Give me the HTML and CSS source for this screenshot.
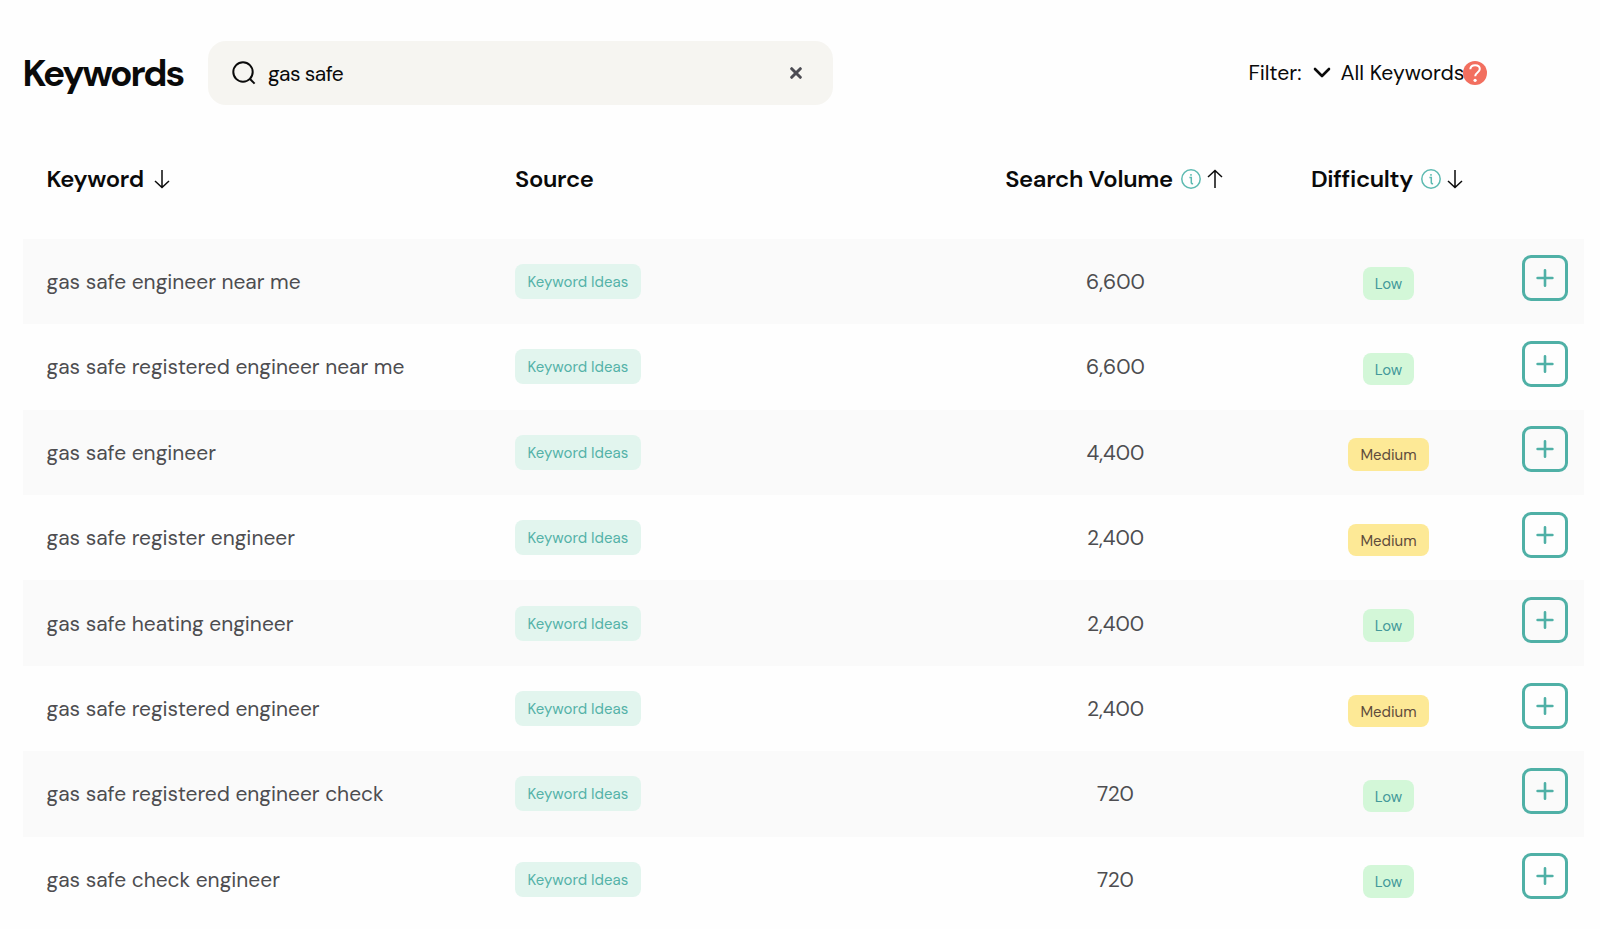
FILE: index.html
```html
<!DOCTYPE html>
<html lang="en">
<head>
    <meta charset="UTF-8">
    <meta name="viewport" content="width=device-width, initial-scale=1.0">
    <title>Keywords</title>
    <link rel="stylesheet" href="styles.css">
</head>
<body>
    <!-- Shared icons -->
    <svg class="sprite">
        <symbol id="arrow-down" viewBox="0 0 16 20">
            <path d="M8 1v17.5M1 12l7 6.5 7-6.5"/>
        </symbol>
        <symbol id="arrow-up" viewBox="0 0 16 20">
            <path d="M8 19V1.5M1 8l7-6.5L15 8"/>
        </symbol>
        <symbol id="info" viewBox="0 0 20 20">
            <circle cx="10" cy="10" r="9.2"/>
            <path d="M8.4 8.6h1.9v5.2q0 1 1.8.8M10 5v1.7"/>
        </symbol>
        <symbol id="plus" viewBox="0 0 18 18">
            <path d="M9 1.3v15.4M1.6 9h14.8"/>
        </symbol>
    </svg>

    <header class="topbar">
        <h1>Keywords</h1>
        <div class="search">
            <svg class="search-icon" viewBox="0 0 24 24"><circle cx="11" cy="11" r="9.7"/><path d="M18 18l4.6 4.6"/></svg>
            <span class="search-text">gas safe</span>
            <svg class="clear-icon" viewBox="0 0 12 12"><path d="M1.7 1.7l8.6 8.6M10.3 1.7l-8.6 8.6"/></svg>
        </div>
        <div class="filter">
            <span class="filter-label">Filter:</span>
            <svg class="chevron" viewBox="0 0 18 12"><path d="M2 2l7 7 7-7"/></svg>
            <span class="filter-value">All Keywords</span>
            <svg class="help" viewBox="0 0 24 24"><circle cx="12" cy="12" r="12"/><path d="M7.3 8.3c.2-2.7 2.2-4 4.8-4 2.7 0 4.7 1.4 4.7 3.8 0 3.6-4.6 3.3-4.6 7.2"/><circle class="dot" cx="12.1" cy="19.3" r="1.6"/></svg>
        </div>
    </header>

    <main class="table">
        <div class="row head">
            <div class="cell keyword"><span>Keyword</span><svg class="arrow"><use href="#arrow-down"/></svg></div>
            <div class="cell"><span>Source</span></div>
            <div class="cell center"><span>Search Volume</span><svg class="info"><use href="#info"/></svg><svg class="arrow"><use href="#arrow-up"/></svg></div>
            <div class="cell center"><span>Difficulty</span><svg class="info"><use href="#info"/></svg><svg class="arrow"><use href="#arrow-down"/></svg></div>
        </div>
        <div class="row">
            <div class="cell keyword">gas safe engineer near me</div>
            <div class="cell"><span class="badge">Keyword Ideas</span></div>
            <div class="cell center">6,600</div>
            <div class="cell center"><span class="level low">Low</span></div>
            <div class="cell"><button class="add"><svg><use href="#plus"/></svg></button></div>
        </div>
        <div class="row">
            <div class="cell keyword">gas safe registered engineer near me</div>
            <div class="cell"><span class="badge">Keyword Ideas</span></div>
            <div class="cell center">6,600</div>
            <div class="cell center"><span class="level low">Low</span></div>
            <div class="cell"><button class="add"><svg><use href="#plus"/></svg></button></div>
        </div>
        <div class="row">
            <div class="cell keyword">gas safe engineer</div>
            <div class="cell"><span class="badge">Keyword Ideas</span></div>
            <div class="cell center">4,400</div>
            <div class="cell center"><span class="level medium">Medium</span></div>
            <div class="cell"><button class="add"><svg><use href="#plus"/></svg></button></div>
        </div>
        <div class="row">
            <div class="cell keyword">gas safe register engineer</div>
            <div class="cell"><span class="badge">Keyword Ideas</span></div>
            <div class="cell center">2,400</div>
            <div class="cell center"><span class="level medium">Medium</span></div>
            <div class="cell"><button class="add"><svg><use href="#plus"/></svg></button></div>
        </div>
        <div class="row">
            <div class="cell keyword">gas safe heating engineer</div>
            <div class="cell"><span class="badge">Keyword Ideas</span></div>
            <div class="cell center">2,400</div>
            <div class="cell center"><span class="level low">Low</span></div>
            <div class="cell"><button class="add"><svg><use href="#plus"/></svg></button></div>
        </div>
        <div class="row">
            <div class="cell keyword">gas safe registered engineer</div>
            <div class="cell"><span class="badge">Keyword Ideas</span></div>
            <div class="cell center">2,400</div>
            <div class="cell center"><span class="level medium">Medium</span></div>
            <div class="cell"><button class="add"><svg><use href="#plus"/></svg></button></div>
        </div>
        <div class="row">
            <div class="cell keyword">gas safe registered engineer check</div>
            <div class="cell"><span class="badge">Keyword Ideas</span></div>
            <div class="cell center">720</div>
            <div class="cell center"><span class="level low">Low</span></div>
            <div class="cell"><button class="add"><svg><use href="#plus"/></svg></button></div>
        </div>
        <div class="row">
            <div class="cell keyword">gas safe check engineer</div>
            <div class="cell"><span class="badge">Keyword Ideas</span></div>
            <div class="cell center">720</div>
            <div class="cell center"><span class="level low">Low</span></div>
            <div class="cell"><button class="add"><svg><use href="#plus"/></svg></button></div>
        </div>
    </main>
</body>
</html>
```
FILE: styles.css
```css
* { box-sizing: border-box; }
body {
    margin: 0;
    height: 929px;
    overflow: hidden;
    background: #fefefe;
    color: #0a0a0a;
    font-family: "DM Sans", Inter, sans-serif;
    white-space: nowrap;
}
svg {
    fill: none;
    stroke: currentColor;
    flex: none;
}
.sprite { display: none; }

/* Top bar */
.topbar {
    display: flex;
    align-items: center;
    height: 64px;
    padding-left: 22.5px;
    margin-top: 41.4px;
}
h1 {
    width: 185px;
    margin: 0;
    font-size: 37px;
    font-weight: 700;
    letter-spacing: -2.1px;
}
.search {
    display: flex;
    align-items: center;
    width: 625px;
    height: 64px;
    padding: 0 30.5px 0 24.5px;
    border-radius: 18px;
    background: #f6f5f1;
}
.search-icon { width: 24px; height: 24px; stroke-width: 2; }
.search-text { flex: 1; margin-left: 12px; padding-top: 1px; font-size: 21px; letter-spacing: -0.6px; }
.clear-icon { width: 12px; height: 12px; color: #4c4c53; stroke-width: 3; stroke-linecap: round; }
.filter {
    display: flex;
    align-items: center;
    margin-left: 416px;
    font-size: 21.2px;
}
.filter-label { width: 64.5px; letter-spacing: -0.1px; }
.filter-value { width: 122.5px; margin-left: 9.5px; }
.chevron { width: 18px; height: 12px; stroke-width: 2.6; stroke-linecap: round; stroke-linejoin: round; }
.help { width: 24px; height: 24px; stroke: #fff; stroke-width: 2; }
.help circle { fill: #f26f5f; stroke: none; }
.help .dot { fill: #fff; }

/* Keyword table */
.table { width: 1561px; margin-left: 22.5px; }
.row {
    display: grid;
    grid-template-columns: 492.5px 455.5px 290px 256px 67px;
    height: 85.43px;
    font-size: 20.95px;
    color: #4d4d50;
}
.row:nth-child(even) { background: #fafafa; }
.row.head {
    height: 133.3px;
    padding-top: 13px;
    font-size: 23.8px;
    font-weight: 600;
    letter-spacing: -0.3px;
    color: #0a0a0a;
}
.cell { display: flex; align-items: center; }
.cell.keyword { padding-left: 24px; }
.cell.center { justify-content: center; }
.head .cell.center { padding-right: 3px; }
.head .arrow { width: 16px; height: 20px; margin: 1px 0 0 10px; stroke-width: 1.5; }
.head .info { width: 20px; height: 20px; margin: 1px 0 0 8px; color: #5dbab1; stroke-width: 1.5; }
.head .info + .arrow { margin-left: 6px; }
.badge {
    height: 35px;
    padding: 1px 12.5px 0;
    border-radius: 8px;
    background: #e2f5ee;
    color: #54b2a8;
    font-size: 15px;
    line-height: 34px;
}
.level {
    height: 32.5px;
    margin-top: 4.5px;
    padding: 1px 12px 0;
    border-radius: 8px;
    font-size: 15px;
    line-height: 32px;
}
.low { background: #d3f7d8; color: #43999a; }
.medium { background: #fde996; color: #5f4c3c; }
.add {
    display: flex;
    align-items: center;
    justify-content: center;
    width: 46px;
    height: 46px;
    margin: 0 0 6px 5px;
    padding: 0;
    border: 3px solid #4fb0a6;
    border-radius: 9px;
    background: transparent;
    color: #4fb0a6;
}
.add svg { width: 18px; height: 18px; stroke-width: 2.6; stroke-linecap: round; }
```
